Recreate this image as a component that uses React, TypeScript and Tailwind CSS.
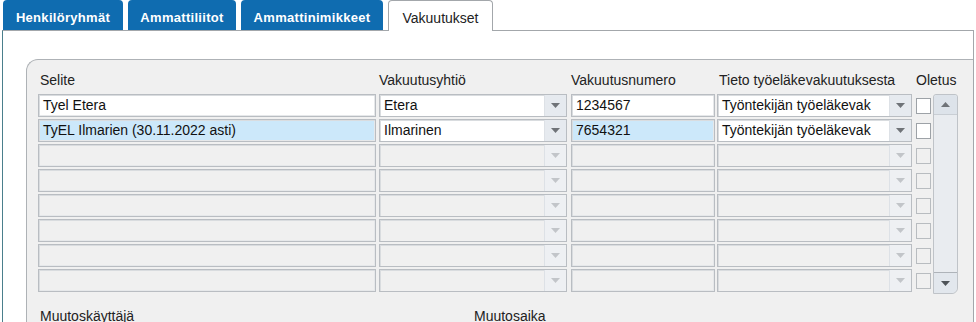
import React from 'react';

type Row = {
  selite: string;
  yhtio: string;
  nro: string;
  tieto: string;
  selected?: boolean;
};

const rows: (Row | null)[] = [
  { selite: 'Tyel Etera', yhtio: 'Etera', nro: '1234567', tieto: 'Työntekijän työeläkevak' },
  {
    selite: 'TyEL Ilmarien (30.11.2022 asti)',
    yhtio: 'Ilmarinen',
    nro: '7654321',
    tieto: 'Työntekijän työeläkevak',
    selected: true,
  },
  null,
  null,
  null,
  null,
  null,
  null,
];

const tabs = ['Henkilöryhmät', 'Ammattiliitot', 'Ammattinimikkeet'];
const tabWidths = ['w-[120px]', 'w-[108px]', 'w-[142px]'];

function Arrow({ up = false, color }: { up?: boolean; color: string }) {
  return (
    <svg width="9" height="5" viewBox="0 0 9 5" className={up ? 'rotate-180' : ''}>
      <path d="M0 0 L9 0 L4.5 5 Z" fill={color} />
    </svg>
  );
}

function TextCell({ value, width, tone }: { value?: string; width: string; tone: 'white' | 'blue' | 'empty' }) {
  const bg = tone === 'white' ? 'bg-white' : tone === 'blue' ? 'bg-[#cce8fa]' : 'bg-[#f0f0f0]';
  return (
    <div
      className={`${width} ${bg} h-[23px] border border-[#b9bdc2] shadow-[inset_1px_1px_0_#d9dcdf,inset_-1px_-1px_0_#e6e8ea] pl-[4px] flex items-center overflow-hidden whitespace-nowrap text-[14px] text-[#111]`}
    >
      {value}
    </div>
  );
}

function SelectCell({ value, width }: { value?: string; width: string }) {
  const filled = value !== undefined;
  return (
    <div
      className={`${width} h-[23px] flex border border-[#b9bdc2] shadow-[inset_1px_1px_0_#d9dcdf] ${
        filled ? 'bg-white' : 'bg-[#f0f0f0]'
      }`}
    >
      <div className="flex-1 pl-[4px] flex items-center overflow-hidden whitespace-nowrap text-[14px] text-[#111]">
        {value}
      </div>
      <div
        className={`w-[22px] flex items-center justify-center border-l border-[#dde1e6] ${
          filled ? 'bg-[#e6eaef]' : 'bg-[#eef0f3]'
        }`}
      >
        <Arrow color={filled ? '#6f7378' : '#c2c5c9'} />
      </div>
    </div>
  );
}

function CheckCell({ filled }: { filled: boolean }) {
  return (
    <div className="w-[15px] h-[23px] flex items-center">
      <div
        className={`w-[15px] h-[16px] border ${filled ? 'bg-white border-[#9da2a7]' : 'bg-[#f0f0f0] border-[#b8bcc0]'}`}
      />
    </div>
  );
}

export default function App() {
  return (
    <div
      className="w-[976px] h-[322px] overflow-hidden bg-white flex flex-col"
      style={{ fontFamily: '"Liberation Sans", Arial, sans-serif' }}
    >
      <div className="h-[4px] bg-[#0f6cb0]" />
      <div className="flex items-end gap-[5px] pl-[3px] h-[30px]">
        {tabs.map((t, i) => (
          <div
            key={t}
            className={`${tabWidths[i]} h-[30px] pt-[5px] rounded-t-[4px] bg-[#0f6cb0] text-white font-bold text-[13px] flex items-center justify-center tracking-[0.3px]`}
          >
            {t}
          </div>
        ))}
        <div className="w-[105px] h-[31px] pt-[5px] -mb-px relative z-10 rounded-t-[4px] bg-white border border-b-0 border-[#a3a7ab] text-[#222] text-[14px] flex items-center justify-center">
          Vakuutukset
        </div>
      </div>
      <div className="ml-[2px] w-[972px] flex-1 border-l border-r border-t border-l-[#4a7f8c] border-r-[#a3a7ab] border-t-[#a3a7ab] pt-[28px] pl-[23px] flex flex-col">
        <div className="flex-1 bg-[#f0f0f0] border-l border-t border-[#aeb2b6] rounded-tl-[12px] pt-[12px] pl-[11px] text-[#222]">
          <div className="flex h-[17px] items-center text-[14px] leading-[17px] mb-[5px]">
            <div className="w-[341px] pl-[2px]">Selite</div>
            <div className="w-[192px]">Vakuutusyhtiö</div>
            <div className="w-[146px]">Vakuutusnumero</div>
            <div className="w-[199px] pl-[2px]">Tieto työeläkevakuutuksesta</div>
            <div>Oletus</div>
          </div>
          <div className="flex items-start">
            <div className="flex flex-col gap-[2px]">
              {rows.map((r, i) => (
                <div key={i} className="flex items-center">
                  <TextCell width="w-[338px]" value={r?.selite} tone={r ? (r.selected ? 'blue' : 'white') : 'empty'} />
                  <div className="w-[3px]" />
                  <SelectCell width="w-[188px]" value={r?.yhtio} />
                  <div className="w-[4px]" />
                  <TextCell width="w-[144px]" value={r?.nro} tone={r ? (r.selected ? 'blue' : 'white') : 'empty'} />
                  <div className="w-[2px]" />
                  <SelectCell width="w-[195px]" value={r?.tieto} />
                  <div className="w-[4px]" />
                  <CheckCell filled={!!r} />
                </div>
              ))}
            </div>
            <div className="ml-[2px] w-[25px] h-[200px] border border-[#bfc3c8] bg-[#e9ecf0] rounded-t-[3px] rounded-br-[6px] flex flex-col justify-between">
              <div className="h-[20px] bg-[#dde3ea] border-b border-[#c9ced4] rounded-t-[3px] flex items-center justify-center">
                <Arrow up color="#6f7378" />
              </div>
              <div className="h-[21px] bg-[#e2e7ed] border-t border-[#aeb3b9] rounded-br-[6px] flex items-center justify-center">
                <Arrow color="#4e5358" />
              </div>
            </div>
          </div>
          <div className="flex mt-[14px] text-[14px] leading-[17px] text-[#222]">
            <div className="w-[436px] pl-[2px]">Muutoskäyttäjä</div>
            <div>Muutosaika</div>
          </div>
        </div>
      </div>
    </div>
  );
}
